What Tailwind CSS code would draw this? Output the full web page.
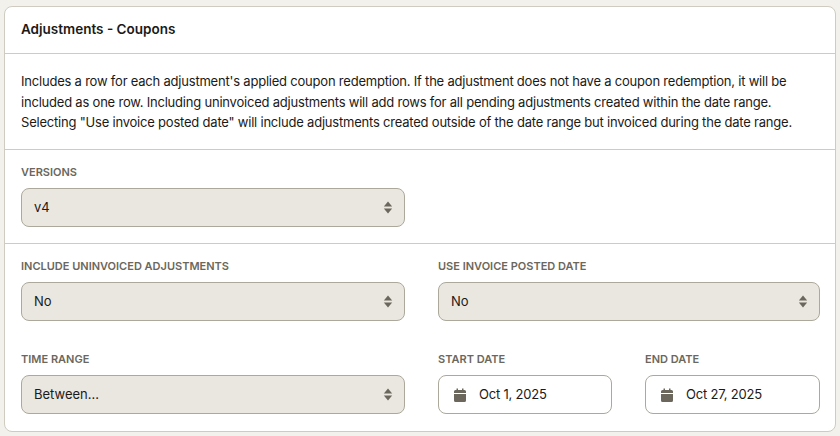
<!DOCTYPE html>
<html lang="en">
<head>
    <meta charset="UTF-8">
    <title>Adjustments - Coupons</title>
    <script src="https://cdn.jsdelivr.net/npm/@tailwindcss/browser@4"></script>
</head>
<body class="bg-[#f3f1ec] font-[Inter,sans-serif] text-[#1a1a18] h-[436px] overflow-hidden">
    <main class="mx-[4px] mt-[6px] h-[426px] bg-white border border-[#cfcbc1] rounded-[8px] overflow-hidden">
        <h1 class="h-[47px] flex items-center px-4 pb-[2px] text-[13.5px] font-semibold border-b border-[#cfcbc1]">Adjustments - Coupons</h1>

        <p class="h-[96px] px-4 pt-[17px] text-[13px] tracking-[-0.21px] leading-[20.5px] border-b border-[#cfcbc1]">Includes a row for each adjustment's applied coupon redemption. If the adjustment does not have a coupon redemption, it will be<br>included as one row. Including uninvoiced adjustments will add rows for all pending adjustments created within the date range.<br>Selecting "Use invoice posted date" will include adjustments created outside of the date range but invoiced during the date range.</p>

        <div class="h-[94px] px-4 pt-[16px] border-b border-[#cfcbc1]">
            <label class="block h-[22px] text-[11px] font-semibold leading-[13px] text-[#6b675c]">VERSIONS</label>
            <div class="w-[384px] h-[39px] flex items-center justify-between pl-3 pr-[11px] bg-[#eae7e0] border border-[#aca89b] rounded-[8px] text-[13px]">
                <span>v4</span>
                <svg width="10" height="13" viewBox="0 0 10 14" fill="#6b675c"><path d="M5 0.5 9.5 6H0.5Z"/><path d="M5 13.5 0.5 8H9.5Z"/></svg>
            </div>
        </div>

        <div class="grid grid-cols-[384px_382px] gap-x-[33px] gap-y-[32px] px-4 pt-[16px]">
            <div>
                <label class="block h-[22px] text-[11px] font-semibold leading-[13px] text-[#6b675c]">INCLUDE UNINVOICED ADJUSTMENTS</label>
                <div class="h-[39px] flex items-center justify-between pl-3 pr-[11px] bg-[#eae7e0] border border-[#aca89b] rounded-[8px] text-[13px]">
                    <span>No</span>
                    <svg width="10" height="13" viewBox="0 0 10 14" fill="#6b675c"><path d="M5 0.5 9.5 6H0.5Z"/><path d="M5 13.5 0.5 8H9.5Z"/></svg>
                </div>
            </div>
            <div>
                <label class="block h-[22px] text-[11px] font-semibold leading-[13px] text-[#6b675c]">USE INVOICE POSTED DATE</label>
                <div class="h-[39px] flex items-center justify-between pl-3 pr-[11px] bg-[#eae7e0] border border-[#aca89b] rounded-[8px] text-[13px]">
                    <span>No</span>
                    <svg width="10" height="13" viewBox="0 0 10 14" fill="#6b675c"><path d="M5 0.5 9.5 6H0.5Z"/><path d="M5 13.5 0.5 8H9.5Z"/></svg>
                </div>
            </div>
            <div>
                <label class="block h-[22px] text-[11px] font-semibold leading-[13px] text-[#6b675c]">TIME RANGE</label>
                <div class="h-[39px] flex items-center justify-between pl-3 pr-[11px] bg-[#eae7e0] border border-[#aca89b] rounded-[8px] text-[13px]">
                    <span>Between...</span>
                    <svg width="10" height="13" viewBox="0 0 10 14" fill="#6b675c"><path d="M5 0.5 9.5 6H0.5Z"/><path d="M5 13.5 0.5 8H9.5Z"/></svg>
                </div>
            </div>
            <div class="grid grid-cols-[174px_175px] gap-x-[33px]">
                <div>
                    <label class="block h-[22px] text-[11px] font-semibold leading-[13px] text-[#6b675c]">START DATE</label>
                    <div class="h-[39px] flex items-center gap-[13px] pl-[15px] bg-white border border-[#aca89b] rounded-[8px] text-[13px] tracking-[-0.2px]">
                        <svg width="12" height="14" viewBox="0 0 12 14" fill="#6b675c"><path d="M2.5 0.5H4V2H8V0.5H9.5V2H10.5A1.5 1.5 0 0 1 12 3.5V5H0V3.5A1.5 1.5 0 0 1 1.5 2H2.5Z"/><path d="M0 6H12V12.5A1.5 1.5 0 0 1 10.5 14H1.5A1.5 1.5 0 0 1 0 12.5Z"/></svg>
                        <span>Oct 1, 2025</span>
                    </div>
                </div>
                <div>
                    <label class="block h-[22px] text-[11px] font-semibold leading-[13px] text-[#6b675c]">END DATE</label>
                    <div class="h-[39px] flex items-center gap-[13px] pl-[15px] bg-white border border-[#aca89b] rounded-[8px] text-[13px] tracking-[-0.2px]">
                        <svg width="12" height="14" viewBox="0 0 12 14" fill="#6b675c"><path d="M2.5 0.5H4V2H8V0.5H9.5V2H10.5A1.5 1.5 0 0 1 12 3.5V5H0V3.5A1.5 1.5 0 0 1 1.5 2H2.5Z"/><path d="M0 6H12V12.5A1.5 1.5 0 0 1 10.5 14H1.5A1.5 1.5 0 0 1 0 12.5Z"/></svg>
                        <span>Oct 27, 2025</span>
                    </div>
                </div>
            </div>
        </div>
    </main>
</body>
</html>
